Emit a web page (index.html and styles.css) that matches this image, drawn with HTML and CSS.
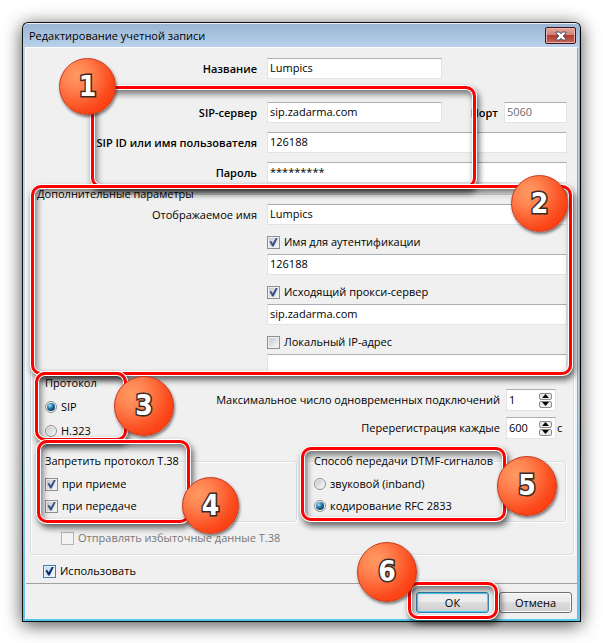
FILE: index.html
```html
<!DOCTYPE html>
<html lang="ru">
<head>
    <meta charset="utf-8">
    <title>Редактирование учетной записи</title>
    <link rel="stylesheet" href="styles.css">
</head>
<body>
    <form class="window">
        <div class="titlebar">
            <span>Редактирование учетной записи</span>
            <button type="button" class="close-button" aria-label="Закрыть">
                <svg width="12" height="10" viewBox="0 0 12 10">
                    <path d="M1 1h3.4L6 2.8 7.6 1H11v1L8.2 5 11 8v1H7.6L6 7.2 4.4 9H1V8l2.8-3L1 2z" fill="#fff" stroke="#4b4f63" stroke-width="1"/>
                </svg>
            </button>
        </div>

        <div class="client">
            <!-- Account -->
            <div class="fields account">
                <label class="name required" for="title">Название</label>
                <input type="text" class="text short" id="title" value="Lumpics">

                <label class="name required second" for="server">SIP-сервер</label>
                <div class="server-row second">
                    <input type="text" class="text short" id="server" value="sip.zadarma.com">
                    <label class="required port-label" for="port">Порт</label>
                    <input type="text" class="text port" id="port" value="5060" disabled>
                </div>

                <label class="name required" for="user">SIP ID или имя пользователя</label>
                <input type="text" class="text" id="user" value="126188">

                <label class="name required" for="password">Пароль</label>
                <input type="text" class="text" id="password" value="*********">
            </div>

            <!-- Additional settings -->
            <fieldset class="group advanced">
                <legend>Дополнительные параметры</legend>
                <div class="fields">
                    <label class="name" for="display">Отображаемое имя</label>
                    <input type="text" class="text" id="display" value="Lumpics">

                    <div class="option">
                        <label class="check"><input type="checkbox" checked>Имя для аутентификации</label>
                        <input type="text" class="text" aria-label="Имя для аутентификации" value="126188">
                    </div>
                    <div class="option">
                        <label class="check"><input type="checkbox" checked>Исходящий прокси-сервер</label>
                        <input type="text" class="text" aria-label="Исходящий прокси-сервер" value="sip.zadarma.com">
                    </div>
                    <div class="option">
                        <label class="check"><input type="checkbox">Локальный IP-адрес</label>
                        <input type="text" class="text" aria-label="Локальный IP-адрес">
                    </div>
                </div>

                <div class="protocol-row">
                    <fieldset class="protocol">
                        <legend>Протокол</legend>
                        <label class="check"><input type="radio" name="protocol" checked>SIP</label>
                        <label class="check"><input type="radio" name="protocol">H.323</label>
                    </fieldset>
                    <div class="limits">
                        <label for="connections">Максимальное число одновременных подключений</label>
                        <div class="spin">
                            <input type="text" id="connections" value="1">
                            <div class="spin-buttons">
                                <button type="button" aria-label="Больше"><svg width="7" height="4" viewBox="0 0 7 4"><path d="M3.5 0L7 4H0z"/></svg></button>
                                <button type="button" aria-label="Меньше"><svg width="7" height="4" viewBox="0 0 7 4"><path d="M3.5 4L7 0H0z"/></svg></button>
                            </div>
                        </div>
                        <span></span>
                        <label for="interval">Перерегистрация каждые</label>
                        <div class="spin">
                            <input type="text" id="interval" value="600">
                            <div class="spin-buttons">
                                <button type="button" aria-label="Больше"><svg width="7" height="4" viewBox="0 0 7 4"><path d="M3.5 0L7 4H0z"/></svg></button>
                                <button type="button" aria-label="Меньше"><svg width="7" height="4" viewBox="0 0 7 4"><path d="M3.5 4L7 0H0z"/></svg></button>
                            </div>
                        </div>
                        <span class="unit">с</span>
                    </div>
                </div>

                <div class="signal-row">
                    <fieldset class="group signal">
                        <legend>Запретить протокол T.38</legend>
                        <label class="check"><input type="checkbox" checked>при приеме</label>
                        <label class="check"><input type="checkbox" checked>при передаче</label>
                    </fieldset>
                    <fieldset class="group signal">
                        <legend>Способ передачи DTMF-сигналов</legend>
                        <label class="check"><input type="radio" name="dtmf">звуковой (inband)</label>
                        <label class="check"><input type="radio" name="dtmf" checked>кодирование RFC 2833</label>
                    </fieldset>
                </div>

                <label class="check redundant"><input type="checkbox" disabled>Отправлять избыточные данные T.38</label>
            </fieldset>

            <label class="check use"><input type="checkbox" checked>Использовать</label>

            <div class="actions">
                <button type="submit" class="button default">ОК</button>
                <button type="button" class="button">Отмена</button>
            </div>
        </div>
    </form>

    <!-- Callouts over the dialog -->
    <div class="frame frame-1"></div>
    <div class="frame frame-2"></div>
    <div class="frame frame-3"></div>
    <div class="frame frame-4"></div>
    <div class="frame frame-5"></div>
    <div class="frame frame-6"></div>
    <span class="badge badge-1">1</span>
    <span class="badge badge-2">2</span>
    <span class="badge badge-3 large">3</span>
    <span class="badge badge-4">4</span>
    <span class="badge badge-5 large">5</span>
    <span class="badge badge-6 large">6</span>
</body>
</html>
```

FILE: styles.css
```css
* {
    box-sizing: border-box;
}
body {
    margin: 0;
    padding: 22px;
    position: relative;
    background: #fff;
    color: #000;
    font: 11px/16px "Open Sans", "Noto Sans", sans-serif;
}
input, button {
    font: inherit;
    color: inherit;
    margin: 0;
}
fieldset {
    border: 0;
    margin: 0;
    padding: 0;
    min-width: 0;
}
legend {
    padding: 0;
}

/* Window */
.window {
    border: 1px solid #111;
    border-right-color: #000;
    border-radius: 6px 6px 0 0;
    padding: 0 2px 2px;
    background: linear-gradient(#98b4d2, #b9d1ea 24px, #b9d1ea 60%, #5cc4ea);
    box-shadow: inset 0 1px 0 #e8f1fa, inset -1px 0 0 #4cc8ee, inset 0 -1px 0 #4cc8ee, 0 3px 18px rgba(0, 0, 0, 0.7);
}
.titlebar {
    display: flex;
    align-items: center;
    justify-content: space-between;
    height: 24px;
    padding: 1px 2px 0 4px;
}
.close-button {
    display: flex;
    align-items: center;
    justify-content: center;
    width: 31px;
    height: 17px;
    padding: 0;
    border: 1px solid #43131d;
    border-radius: 2px;
    background: linear-gradient(#e3a79e, #cf8075 48%, #b03a2c 50%, #c9695b);
    box-shadow: inset 0 0 0 1px #e5b3ac;
}
.client {
    display: flex;
    flex-direction: column;
    padding: 10px 0 0;
    background: #f0f0f0;
    border-top: 1px solid #fff;
    border-left: 1px solid #fff;
    border-right: 1px solid #a0a8b0;
}

/* Text fields */
.fields {
    display: grid;
    grid-template-columns: 226px 1fr;
    column-gap: 10px;
    row-gap: 9px;
    align-items: center;
}
.account {
    padding: 0 10px 0 5px;
}
.name {
    text-align: right;
}
.required {
    font-weight: 600;
}
.second {
    margin-top: 14px;
}
.text {
    width: 100%;
    height: 21px;
    padding: 0 2px 2px;
    border: 1px solid #e2e3ea;
    border-top-color: #abadb3;
    border-radius: 1px;
    background: #fff;
}
.short {
    width: 175px;
}
.server-row {
    display: flex;
    align-items: center;
}
.port-label {
    margin-left: auto;
    margin-right: 6px;
}
.port {
    width: 63px;
    color: #6d6d6d;
}
.option {
    grid-column: 2;
    display: grid;
    gap: 4px;
}

/* Group boxes */
.group {
    border: 1px solid #d5dfe5;
    border-radius: 3px;
    box-shadow: inset 1px 1px 0 #fff, 1px 1px 0 #fff;
}
.advanced {
    margin: 3px 3px 0 4px;
    padding: 2px 6px 8px 0;
}
.advanced > legend {
    margin-left: 6px;
}
.protocol-row {
    display: flex;
    justify-content: space-between;
    padding-left: 14px;
}
.protocol {
    display: flex;
    flex-direction: column;
}
.protocol .check {
    margin-top: 8px;
}
.limits {
    display: grid;
    grid-template-columns: auto 50px 10px;
    column-gap: 1px;
    row-gap: 6px;
    align-items: center;
    justify-items: end;
    padding-top: 14px;
}
.limits label {
    padding-right: 5px;
}
.unit {
    justify-self: start;
}
.spin {
    display: flex;
    align-items: center;
    width: 100%;
    height: 22px;
    padding: 0 3px 0 2px;
    border: 1px solid #e2e3ea;
    border-top-color: #abadb3;
    background: #fff;
}
.spin input {
    flex: 1;
    min-width: 0;
    padding: 0;
    border: 0;
    background: none;
}
.spin-buttons {
    display: grid;
    gap: 1px;
}
.spin-buttons button {
    display: flex;
    align-items: center;
    justify-content: center;
    width: 13px;
    height: 7px;
    padding: 0;
    border: 1px solid #8a8a8a;
    border-radius: 2px;
    background: #ececec;
}
.signal-row {
    display: grid;
    grid-template-columns: 1fr 1fr;
    gap: 10px;
    margin-top: 14px;
    padding: 0 1px 0 7px;
}
.signal {
    display: flex;
    flex-direction: column;
    gap: 6px;
    padding: 7px 6px;
}

/* Check boxes and radio buttons */
.check {
    display: flex;
    align-items: center;
    gap: 4px;
}
.check input {
    appearance: none;
    display: grid;
    place-items: center;
    flex: none;
    width: 13px;
    height: 13px;
    border: 1px solid #8e8f8f;
    background: linear-gradient(135deg, #c5cad1, #f6f6f6) content-box #f4f4f4;
    padding: 1px;
}
.check input[type="checkbox"]:checked::before {
    content: "";
    width: 9px;
    height: 9px;
    background: #3a5488;
    clip-path: polygon(5% 45%, 25% 40%, 42% 65%, 78% 0, 100% 0, 52% 100%, 35% 100%);
}
.check input[type="radio"] {
    width: 12px;
    height: 12px;
    border-radius: 50%;
    padding: 1px;
}
.check input[type="radio"]:checked::before {
    content: "";
    width: 8px;
    height: 8px;
    border-radius: 50%;
    background: radial-gradient(circle at 35% 30%, #9fe0f8, #1c6f9f 45%, #0d3553 80%);
}
.check input:disabled {
    border-color: #b5b5b5;
    background: #f4f4f4;
}
.redundant {
    margin: 8px 0 0 30px;
    color: #777;
}
.use {
    margin: 8px 0 4px 17px;
}
.use input {
    border-color: #3c7fb1;
    background: linear-gradient(135deg, #a8dcf5, #f0faff) content-box #e6f6fd;
}
.use input:checked::before {
    background: #12286e !important;
}

/* Buttons */
.actions {
    display: flex;
    justify-content: flex-end;
    gap: 10px;
    padding: 8px 5px 6px;
    border-top: 1px solid #a0a0a0;
}
.button {
    width: 73px;
    height: 21px;
    padding: 0;
    border: 1px solid #707070;
    border-radius: 3px;
    background: linear-gradient(#f2f2f2, #ebebeb 48%, #dddddd 50%, #cfcfcf);
    box-shadow: inset 0 0 0 1px #fcfcfc;
    line-height: 16px;
}
.default {
    border-color: #3c7fb1;
    box-shadow: inset 0 0 0 1px #48d1f5;
}

/* Callouts */
.frame {
    position: absolute;
    border: 3px solid #f00;
    border-radius: 10px;
    box-shadow: 0 0 0 1px #fff, inset 0 0 0 1px #fff, 2px 4px 6px 1px rgba(0, 0, 0, 0.6), inset 2px 4px 6px 1px rgba(0, 0, 0, 0.5);
    pointer-events: none;
}
.frame-1 {
    left: 91px;
    top: 86px;
    width: 385px;
    height: 102px;
}
.frame-2 {
    left: 31px;
    top: 185px;
    width: 541px;
    height: 190px;
}
.frame-3 {
    left: 35px;
    top: 372px;
    width: 92px;
    height: 69px;
}
.frame-4 {
    left: 37px;
    top: 440px;
    width: 153px;
    height: 83px;
}
.frame-5 {
    left: 301px;
    top: 447px;
    width: 205px;
    height: 74px;
}
.frame-6 {
    left: 408px;
    top: 582px;
    width: 90px;
    height: 37px;
}
.badge {
    position: absolute;
    display: flex;
    align-items: center;
    justify-content: center;
    width: 57px;
    height: 57px;
    border: 1px solid #c8361c;
    border-radius: 50%;
    background: radial-gradient(circle at 30% 30%, #ff9a62, #ff8350 25%, #fb4a1c 65%, #ff2d00);
    box-shadow: 1px 2px 3px rgba(0, 0, 0, 0.5);
    color: #fff;
    font: bold 28px/32px "DejaVu Sans Condensed", "DejaVu Sans", sans-serif;
    -webkit-text-stroke: 3px #3a2a26;
    paint-order: stroke fill;
}
.large {
    width: 60px;
    height: 60px;
}
.badge-1 {
    left: 59px;
    top: 58px;
}
.badge-2 {
    left: 511px;
    top: 175px;
}
.badge-3 {
    left: 114px;
    top: 376px;
}
.badge-4 {
    left: 182px;
    top: 477px;
}
.badge-5 {
    left: 497px;
    top: 456px;
}
.badge-6 {
    left: 357px;
    top: 542px;
}
```
